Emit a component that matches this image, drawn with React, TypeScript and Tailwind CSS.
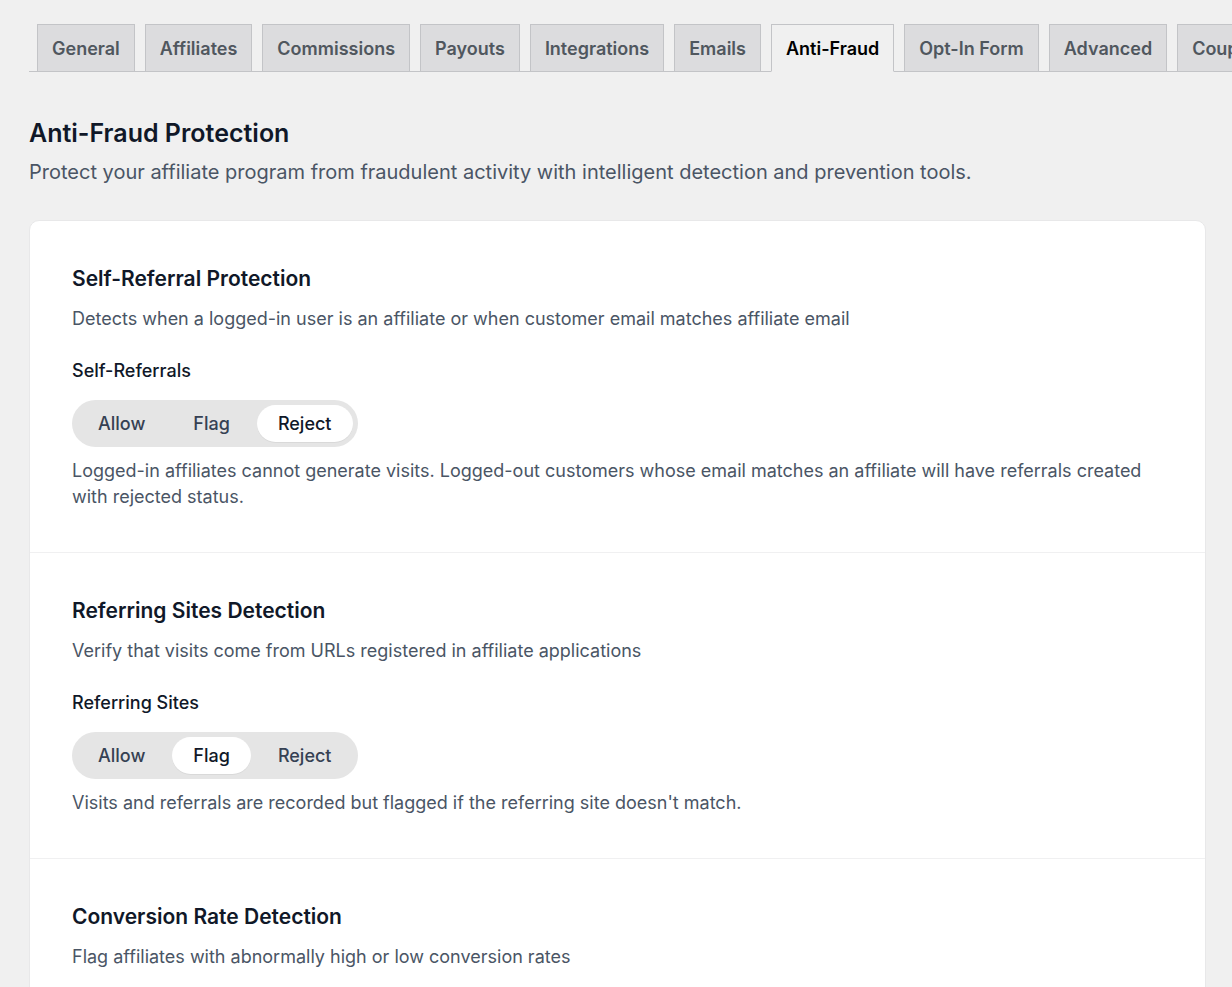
import { useState } from 'react';
import clsx from 'clsx';

const tabs = [
  'General',
  'Affiliates',
  'Commissions',
  'Payouts',
  'Integrations',
  'Emails',
  'Anti-Fraud',
  'Opt-In Form',
  'Advanced',
  'Coupons',
];

const modes = ['Allow', 'Flag', 'Reject'];

function TabBar() {
  const [active, setActive] = useState('Anti-Fraud');

  return (
    <nav className="overflow-hidden pt-6 pl-[29px]">
      <div className="flex gap-2.5 border-b border-[#c3c4c7] pl-2">
        {tabs.map((tab) => (
          <a
            key={tab}
            href="#"
            onClick={(e) => {
              e.preventDefault();
              setActive(tab);
            }}
            className={clsx(
              '-mb-px shrink-0 whitespace-nowrap border px-3.5 pt-[11px] pb-[9px] text-[18px] leading-[26px] font-semibold',
              tab === active
                ? 'border-[#c3c4c7] border-b-[#f0f0f0] bg-[#f0f0f0] text-black'
                : 'border-[#c3c4c7] bg-[#dcdcde] text-[#50575e]'
            )}
          >
            {tab}
          </a>
        ))}
      </div>
    </nav>
  );
}

function ModeSwitch({ label, initial }: { label: string; initial: string }) {
  const [mode, setMode] = useState(initial);

  return (
    <div role="group" aria-label={label} className="mt-4 inline-flex gap-1.5 rounded-full bg-[#e5e5e5] p-[5px]">
      {modes.map((m) => (
        <button
          key={m}
          type="button"
          aria-pressed={m === mode}
          onClick={() => setMode(m)}
          className={clsx(
            'h-[37px] rounded-full px-[21px] text-[18px] leading-[26px] font-medium',
            m === mode ? 'bg-white text-gray-900 shadow-2xs' : 'text-gray-700'
          )}
        >
          {m}
        </button>
      ))}
    </div>
  );
}

type SectionProps = {
  title: string;
  description: string;
  label?: string;
  initial?: string;
  help?: string;
};

function Section({ title, description, label, initial = 'Allow', help }: SectionProps) {
  return (
    <section className="flex flex-col items-start p-[42px]">
      <h3 className="text-[21px] leading-[32px] font-semibold text-gray-900">{title}</h3>
      <p className="mt-[11px] text-[18px] leading-[26px] text-gray-600">{description}</p>
      {label && (
        <>
          <h4 className="mt-[26px] text-[18px] leading-[26px] font-medium text-gray-900">{label}</h4>
          <ModeSwitch label={label} initial={initial} />
          <p className="mt-[11px] text-[18px] leading-[26px] text-gray-600">{help}</p>
        </>
      )}
    </section>
  );
}

export default function App() {
  return (
    <div className="min-h-screen bg-[#f0f0f0] font-[Inter,sans-serif]">
      <TabBar />
      <main className="pt-[45px] pr-[26px] pl-[29px]">
        <h2 className="text-[25px] leading-[32px] font-semibold text-gray-900">Anti-Fraud Protection</h2>
        <p className="mt-2 text-[20px] leading-[30px] text-gray-600">
          Protect your affiliate program from fraudulent activity with intelligent detection and prevention tools.
        </p>

        <div className="mt-[33px] divide-y divide-[#f0f0f1] rounded-[10px] border border-[#e8e8e9] bg-white">
          <Section
            title="Self-Referral Protection"
            description="Detects when a logged-in user is an affiliate or when customer email matches affiliate email"
            label="Self-Referrals"
            initial="Reject"
            help="Logged-in affiliates cannot generate visits. Logged-out customers whose email matches an affiliate will have referrals created with rejected status."
          />
          <Section
            title="Referring Sites Detection"
            description="Verify that visits come from URLs registered in affiliate applications"
            label="Referring Sites"
            initial="Flag"
            help="Visits and referrals are recorded but flagged if the referring site doesn't match."
          />
          <Section
            title="Conversion Rate Detection"
            description="Flag affiliates with abnormally high or low conversion rates"
          />
        </div>
      </main>
    </div>
  );
}
